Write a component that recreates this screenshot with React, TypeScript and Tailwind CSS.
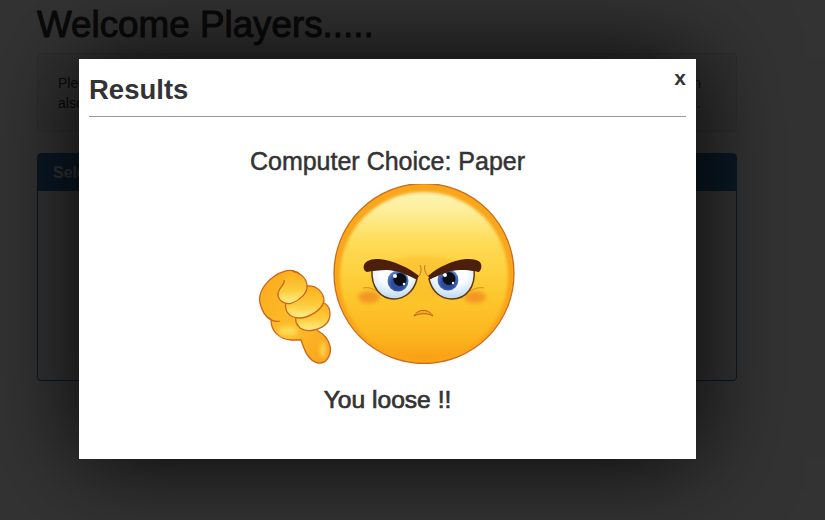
import React from 'react';

// Angry face with the thumb-down hand, drawn in page coordinates
const LoseEmoji = () => (
  <svg width="262" height="180" viewBox="256 184 262 180" className="block mx-auto mt-[8px]">
    <defs>
      <linearGradient id="faceFill" x1="0" y1="0" x2="0" y2="1">
        <stop offset="0" stopColor="#fcf3ae" />
        <stop offset="0.1" stopColor="#fdef9e" />
        <stop offset="0.3" stopColor="#fedb55" />
        <stop offset="0.6" stopColor="#fdc92f" />
        <stop offset="0.85" stopColor="#fcb61f" />
        <stop offset="1" stopColor="#fa9f16" />
      </linearGradient>
      <radialGradient id="eyeFill" cx="0.5" cy="0.2" r="0.9">
        <stop offset="0.35" stopColor="#ffffff" />
        <stop offset="1" stopColor="#a9cff0" />
      </radialGradient>
      <radialGradient id="irisFill" cx="0.5" cy="0.6" r="0.6">
        <stop offset="0.5" stopColor="#2c4a9a" />
        <stop offset="1" stopColor="#5d8ad0" />
      </radialGradient>
      <linearGradient id="handFill" x1="0" y1="0" x2="1" y2="1">
        <stop offset="0" stopColor="#fba91c" />
        <stop offset="0.55" stopColor="#fdbe2a" />
        <stop offset="1" stopColor="#f9a01a" />
      </linearGradient>
      <linearGradient id="fingerFill" x1="0" y1="0" x2="0" y2="1">
        <stop offset="0" stopColor="#fbae1c" />
        <stop offset="0.6" stopColor="#fdcc3c" />
        <stop offset="1" stopColor="#fef08c" />
      </linearGradient>
      <filter id="blush" x="-50%" y="-50%" width="200%" height="200%">
        <feGaussianBlur stdDeviation="2.2" />
      </filter>
      <filter id="soft" x="-20%" y="-20%" width="140%" height="140%">
        <feGaussianBlur stdDeviation="1.6" />
      </filter>
      <clipPath id="leftEye">
        <path d="M371 270 C380 266 400 270 416 279 C413 291 404 299 393 299 C380 299 370 288 371 270 Z" />
      </clipPath>
      <clipPath id="rightEye">
        <path d="M473 269 C462 266 444 270 428 279 C431 291 439 299 451 299 C465 299 475 287 473 269 Z" />
      </clipPath>
    </defs>

    {/* hand */}
    <path
      d="M270 320 C270 330 277 339 290 340 L300 340 C303 349 307 361 317 363 C326 364 331 354 329 346 C327 338 323 334 317 331 L300 300 L303 280 C300 272 291 269 284 271 C270 275 256 290 259 303 C261 312 265 317 270 320 Z"
      fill="url(#handFill)"
      stroke="#cc661c"
      strokeWidth="1.3"
    />
    <ellipse cx="287" cy="331" rx="10" ry="5" fill="#fee15f" opacity="0.8" filter="url(#blush)" />
    <ellipse cx="322" cy="350" rx="3" ry="8" fill="#fee15f" opacity="0.8" filter="url(#blush)" />
    <path d="M268 318 C271 321 275 322 279 321" fill="none" stroke="#cc661c" strokeWidth="1.1" />
    <path
      d="M321 302 C330 305 331 316 326 323 C320 330 306 333 299 328 C294 323 294 319 296 316 Z"
      fill="url(#fingerFill)"
      stroke="#cc661c"
      strokeWidth="1.3"
    />
    <path
      d="M306 286 C316 285 323 293 323 301 C321 310 308 318 298 318 C288 318 283 310 285 303 Z"
      fill="url(#fingerFill)"
      stroke="#cc661c"
      strokeWidth="1.3"
    />
    <path
      d="M283 280 C285 284 277 288 277 294 C277 301 284 305 291 303 C299 300 307 293 306 285 C305 277 298 272 291 271"
      fill="url(#fingerFill)"
      stroke="#cc661c"
      strokeWidth="1.3"
    />

    {/* face */}
    <circle cx="423" cy="273.5" r="90" fill="#f9a61a" stroke="#cb6b1f" strokeWidth="1.3" />
    <circle cx="423" cy="276" r="84" fill="url(#faceFill)" filter="url(#soft)" />
    <ellipse cx="422" cy="278" rx="52" ry="22" fill="#fbbc2a" opacity="0.55" filter="url(#blush)" />
    <ellipse cx="368" cy="297" rx="11" ry="6" fill="#f08a24" opacity="0.8" filter="url(#blush)" />
    <ellipse cx="474" cy="297" rx="11" ry="6" fill="#f08a24" opacity="0.8" filter="url(#blush)" />
    <path d="M362 288 C366 287 371 288 376 291" fill="none" stroke="#d98a1f" strokeWidth="1" />
    <path d="M483 288 C479 287 474 288 469 291" fill="none" stroke="#d98a1f" strokeWidth="1" />

    {/* eyes */}
    <path d="M371 270 C380 266 400 270 416 279 C413 291 404 299 393 299 C380 299 370 288 371 270 Z" fill="url(#eyeFill)" stroke="#5f3a10" strokeWidth="1.5" />
    <g clipPath="url(#leftEye)">
      <circle cx="397" cy="281" r="10.5" fill="url(#irisFill)" />
      <circle cx="399" cy="279.5" r="6.5" fill="#0c0c14" />
      <circle cx="394" cy="276" r="2" fill="#ffffff" />
      <circle cx="403" cy="284" r="1.2" fill="#ffffff" />
    </g>
    <path d="M473 269 C462 266 444 270 428 279 C431 291 439 299 451 299 C465 299 475 287 473 269 Z" fill="url(#eyeFill)" stroke="#5f3a10" strokeWidth="1.5" />
    <g clipPath="url(#rightEye)">
      <circle cx="447" cy="280" r="10.5" fill="url(#irisFill)" />
      <circle cx="448" cy="278.5" r="6.5" fill="#0c0c14" />
      <circle cx="444" cy="275" r="2" fill="#ffffff" />
      <circle cx="452" cy="283" r="1.2" fill="#ffffff" />
    </g>

    {/* brows */}
    <path d="M363 265 C365 260 371 259 378 259 C392 260 408 268 418 276 L416 279 C406 275 396 270 386 270 C378 270 371 271 366 272 C363 271 362 268 363 265 Z" fill="#4b1f0b" />
    <path d="M480 264 C479 260 473 259 465 259 C451 260 436 268 427 276 L429 279 C439 275 449 270 459 270 C467 270 474 271 478 272 C480 270 481 267 480 264 Z" fill="#4b1f0b" />
    <path d="M419 265 C421 269 420 273 418 276" fill="none" stroke="#b9771e" strokeWidth="1" />
    <path d="M424 265 C423 269 424 273 427 276" fill="none" stroke="#b9771e" strokeWidth="1" />

    {/* mouth */}
    <path d="M413 316 C417 309 427 308 432 316 C427 313 419 313 413 316 Z" fill="#f6a51f" stroke="#b5651d" strokeWidth="1" />
  </svg>
);

const App = () => {
  return (
    <div className="relative w-[825px] h-[520px] overflow-hidden bg-white text-[#333333] font-['Liberation_Sans',Arial,sans-serif]">
      {/* page behind the modal */}
      <div className="px-[37px]">
        <h1 className="text-[36.8px] leading-[40px] pt-[5px] font-medium [-webkit-text-stroke:1px_#333333]">Welcome Players.....</h1>
        <div className="mt-[8px] h-[79px] w-[700px] rounded border border-[#e3e3e3] bg-[#f5f5f5] pl-[20px] pr-[35px] pt-[19px] text-[14px] leading-[20px]">
          <p className="whitespace-nowrap [text-align-last:justify]">Please choose rock, paper or scissors and see if you can beat the computer at this game in</p>
          <p className="whitespace-nowrap [text-align-last:justify]">also play it again and again until you have had enough of it, so good luck and have fun.</p>
        </div>
        <div className="mt-[21px] h-[228px] w-[700px] rounded border border-[#337ab7]">
          <div className="h-[37px] bg-[#337ab7] px-[15px] pt-[10px] text-[16px] leading-[18px] font-bold text-white">Select</div>
        </div>
      </div>

      {/* dim layer and modal */}
      <div className="absolute inset-0 bg-black/80">
        <div className="ml-[79px] mt-[59px] h-[400px] w-[617px] bg-white px-[10px] shadow-[0_0_90px_rgba(0,0,0,0.9)]">
          <div className="flex h-[58px] items-start justify-between border-b border-[#999999]">
            <h2 className="pt-[15px] text-[27.5px] leading-[32px] font-bold">Results</h2>
            <span className="pt-[7px] text-[21px] leading-[24px] font-bold">x</span>
          </div>
          <div className="pt-[29px] text-center">
            <p className="text-[25px] leading-[30px] font-medium [-webkit-text-stroke:0.5px_#333333]">Computer Choice: Paper</p>
            <LoseEmoji />
            <p className="pt-[21px] text-[24.6px] leading-[30px] font-medium [-webkit-text-stroke:0.7px_#333333]">You loose !!</p>
          </div>
        </div>
      </div>
    </div>
  );
};

export default App;
